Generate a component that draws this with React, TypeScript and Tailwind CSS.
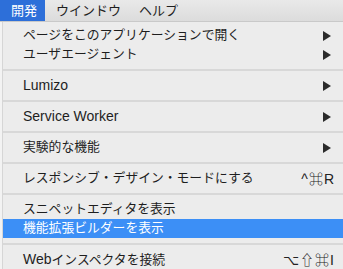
import React from "react";

type Item =
  | { kind: "sep" }
  | {
      kind: "item";
      label: React.ReactNode;
      sub?: boolean;
      shortcut?: string;
      active?: boolean;
    };

const latin = (s: string) => <span className="text-[14px]">{s}</span>;

const items: Item[] = [
  { kind: "item", label: "ページをこのアプリケーションで開く", sub: true },
  { kind: "item", label: "ユーザエージェント", sub: true },
  { kind: "sep" },
  { kind: "item", label: latin("Lumizo"), sub: true },
  { kind: "sep" },
  { kind: "item", label: latin("Service Worker"), sub: true },
  { kind: "sep" },
  { kind: "item", label: "実験的な機能", sub: true },
  { kind: "sep" },
  { kind: "item", label: "レスポンシブ・デザイン・モードにする", shortcut: "^⌘R" },
  { kind: "sep" },
  { kind: "item", label: "スニペットエディタを表示" },
  { kind: "item", label: "機能拡張ビルダーを表示", active: true },
  { kind: "sep" },
  {
    kind: "item",
    label: (
      <>
        {latin("Web")}インスペクタを接続
      </>
    ),
    shortcut: "⌥⇧⌘I",
  },
];

function Arrow({ white }: { white?: boolean }) {
  return (
    <svg width="8" height="10" viewBox="0 0 8 10" className="shrink-0">
      <path d="M0 0 L8 5 L0 10 Z" fill={white ? "#fff" : "#2b2b2b"} />
    </svg>
  );
}

export default function App() {
  return (
    <div
      className="w-[343px] h-[269px] overflow-hidden bg-[#ececec] text-[#1e1e1e] text-[12.8px] leading-none"
      style={{ fontFamily: '"Liberation Sans", "Noto Sans CJK JP", sans-serif' }}
    >
      {/* menu bar */}
      <div className="h-[22px] flex items-stretch bg-gradient-to-b from-[#e9e9e9] to-[#dcdcdc] border-b border-[#c9c9c9] text-[13px]">
        <div className="bg-[#2d6fd9] text-white flex items-center whitespace-nowrap pl-[11px] pr-[8px]">開発</div>
        <div className="flex items-center whitespace-nowrap pl-[11px]">ウインドウ</div>
        <div className="flex items-center whitespace-nowrap pl-[18px]">ヘルプ</div>
      </div>

      <div className="flex">
        {/* strip of the page behind */}
        <div className="w-[3px] h-[247px] bg-[#f3f3f3] border-r border-[#d6d6d6]" />

        <div className="flex-1 pt-[4px]">
          {items.map((it, i) =>
            it.kind === "sep" ? (
              <div key={i} className="h-[12px] flex items-center">
                <div className="h-[2px] w-full bg-[#d8d8d8]" />
              </div>
            ) : (
              <div
                key={i}
                className={`h-[19px] flex items-center pl-[20px] pr-[12px] ${
                  it.active ? "bg-[#3c8ff6] text-white" : ""
                }`}
              >
                <span className="flex-1 whitespace-nowrap">{it.label}</span>
                {it.sub && <Arrow white={it.active} />}
                {it.shortcut && (
                  <span className="text-[14px] tracking-[1px] -mr-[4px] text-[#222]">{it.shortcut}</span>
                )}
              </div>
            )
          )}
        </div>
      </div>
    </div>
  );
}
